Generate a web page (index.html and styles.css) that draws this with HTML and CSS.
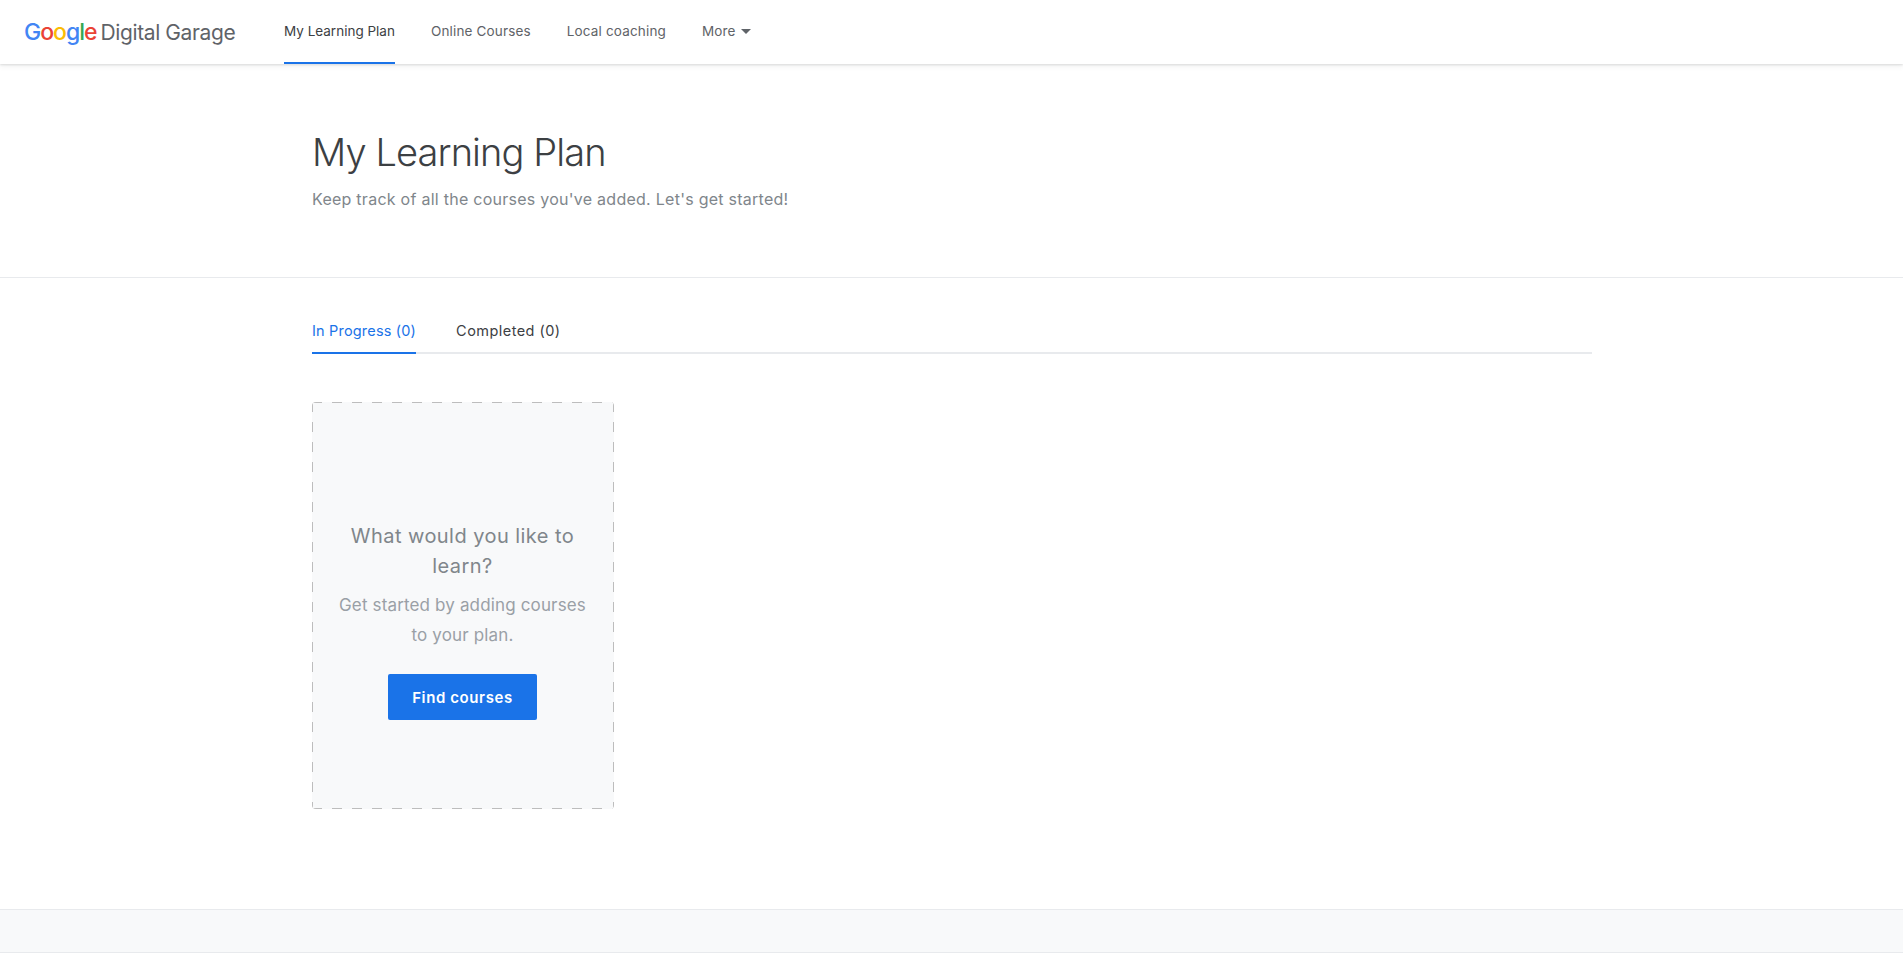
FILE: index.html
```html
<!DOCTYPE html>
<html lang="en">
<head>
<meta charset="utf-8">
<title>My Learning Plan - Google Digital Garage</title>
<link rel="stylesheet" href="styles.css">
</head>
<body>
<header class="topbar">
  <a class="logo" href="#"><span class="logo-google"><span class="g-blue">G</span><span class="g-red">o</span><span class="g-yellow">o</span><span class="g-blue">g</span><span class="g-green">l</span><span class="g-red">e</span></span><span class="logo-name">Digital Garage</span></a>
  <nav class="nav">
    <a class="nav-item active" href="#">My Learning Plan</a>
    <a class="nav-item" href="#">Online Courses</a>
    <a class="nav-item" href="#">Local coaching</a>
    <a class="nav-item" href="#">More<span class="caret"></span></a>
  </nav>
</header>
<section class="hero">
  <div class="container">
    <h1>My Learning Plan</h1>
    <p>Keep track of all the courses you've added. Let's get started!</p>
  </div>
</section>
<main class="content">
  <div class="container">
    <div class="tabs">
      <a class="tab active" href="#">In Progress (0)</a>
      <a class="tab" href="#">Completed (0)</a>
    </div>
    <div class="empty-card">
      <h2>What would you like to learn?</h2>
      <p>Get started by adding courses to your plan.</p>
      <a class="btn" href="#">Find courses</a>
    </div>
  </div>
</main>
<footer class="footer"></footer>
</body>
</html>
```
FILE: styles.css
```css
* { box-sizing: border-box; }
html, body { margin: 0; padding: 0; }
body { font-family: Inter, "Open Sans", "Liberation Sans", sans-serif; background: #fff; color: #3c4043; height: 953px; overflow: hidden; }
a { text-decoration: none; color: inherit; }
.topbar { height: 64px; display: flex; align-items: stretch; background: #fff; box-shadow: 0 1px 2px rgba(60,64,67,.15), 0 2px 6px rgba(60,64,67,.08); padding-left: 24px; position: relative; }
.logo { display: flex; align-items: center; gap: 4px; width: 260px; font-size: 21px; letter-spacing: -0.4px; color: #5f6368; white-space: nowrap; }
.logo-google { font-weight: 500; font-size: 23px; letter-spacing: -1px; }
.g-blue { color: #4285f4; } .g-red { color: #ea4335; } .g-yellow { color: #fbbc05; } .g-green { color: #34a853; }
.nav { display: flex; gap: 36px; }
.nav-item { display: flex; align-items: center; height: 64px; font-size: 13.5px; letter-spacing: .16px; color: #5f6368; border-bottom: 2px solid transparent; white-space: nowrap; }
.nav-item.active { color: #3c4043; border-bottom-color: #1a73e8; letter-spacing: 0; }
.caret { width: 0; height: 0; margin-left: 5px; border: 5px solid transparent; border-top: 5px solid #5f6368; border-bottom: 0; }
.container { width: 1280px; margin-left: 312px; }
.hero { height: 214px; border-bottom: 1px solid #e8eaed; padding-top: 62px; }
h1 { margin: 0; font-size: 38px; line-height: 52px; font-weight: 300; letter-spacing: -0.9px; color: #3c4043; }
.hero p { margin: 9px 0 0; font-size: 16px; line-height: 24px; letter-spacing: .26px; color: #80868b; }
.content { height: 631px; }
.tabs { display: flex; gap: 40px; height: 76px; padding-top: 32px; border-bottom: 2px solid #e8eaed; }
.tab { height: 44px; padding-top: 9px; font-size: 14.5px; line-height: 24px; letter-spacing: .45px; color: #3c4043; }
.tab.active { color: #1a73e8; border-bottom: 2px solid #1a73e8; letter-spacing: .18px; }
.empty-card { width: 302px; height: 407px; margin-top: 48px; padding: 119px 25px 0 24px; display: flex; flex-direction: column; align-items: center; text-align: center; border-radius: 4px; background-color: #f8f9fa;
  background-image:
    repeating-linear-gradient(90deg, #bdbdbd 0 10px, transparent 10px 20px),
    repeating-linear-gradient(90deg, #bdbdbd 0 10px, transparent 10px 20px),
    repeating-linear-gradient(180deg, #bdbdbd 0 10px, transparent 10px 20px),
    repeating-linear-gradient(180deg, #bdbdbd 0 10px, transparent 10px 20px);
  background-size: 100% 1px, 100% 1px, 1px 100%, 1px 100%;
  background-position: 0 0, 0 100%, 0 0, 100% 0;
  background-repeat: no-repeat; }
.empty-card h2 { margin: 0; font-size: 20px; line-height: 30px; font-weight: 400; letter-spacing: .44px; color: #80868b; }
.empty-card p { margin: 9px 0 0; font-size: 17px; line-height: 30px; letter-spacing: .15px; color: #9aa0a6; }
.btn { margin-top: 24px; width: 149px; height: 46px; flex: none; display: flex; align-items: center; justify-content: center; background: #1a73e8; color: #fff; font-size: 15px; letter-spacing: .6px; font-weight: 600; border-radius: 2px; }
.footer { height: 44px; background: #f8f9fa; border-top: 1px solid #e8eaed; border-bottom: 1px solid #e8eaed; }
```
